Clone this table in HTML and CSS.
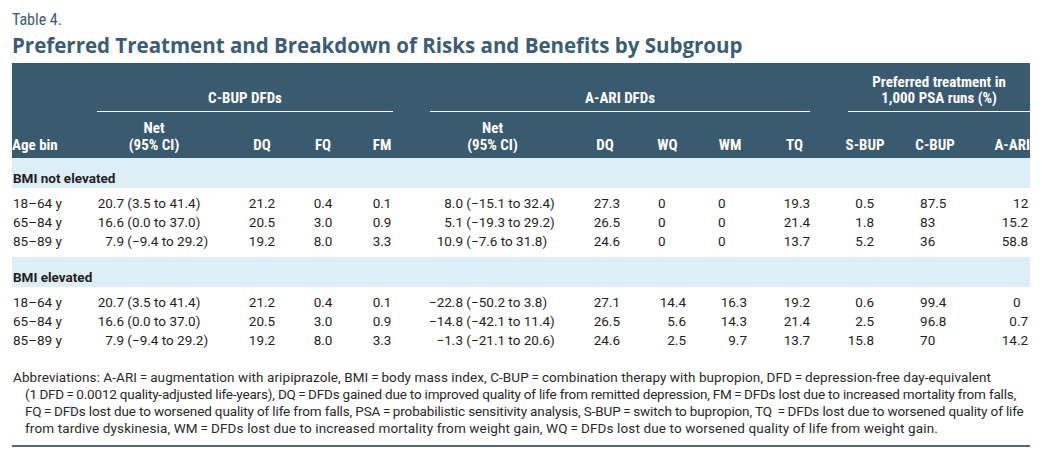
FILE: index.html
```html
<!DOCTYPE html>
<html lang="en">
<head>
<meta charset="utf-8">
<title>Table 4</title>
<link rel="stylesheet" href="styles.css">
</head>
<body>
<div class="page">
  <div class="label">Table 4.</div>
  <h1 class="title">Preferred Treatment and Breakdown of Risks and Benefits by Subgroup</h1>
  <table class="tbl">
    <colgroup>
      <col class="w85"><col class="w135"><col class="w60"><col class="w62"><col class="w56">
      <col class="w165"><col class="w60"><col class="w65"><col class="w60"><col class="w70">
      <col class="w70"><col class="w70"><col class="w60">
    </colgroup>
    <thead>
      <tr class="grow">
        <th></th>
        <th colspan="4" class="g"><div class="gl gl-c">C-BUP DFDs</div></th>
        <th colspan="5" class="g"><div class="gl gl-a">A-ARI DFDs</div></th>
        <th colspan="3" class="g"><div class="gl gl-p">Preferred treatment in<br>1,000 PSA runs (%)</div></th>
      </tr>
      <tr class="crow">
        <th class="h-age">Age bin</th>
        <th class="h-cnet">Net<br>(95% CI)</th>
        <th>DQ</th>
        <th>FQ</th>
        <th>FM</th>
        <th>Net<br>(95% CI)</th>
        <th>DQ</th>
        <th>WQ</th>
        <th>WM</th>
        <th class="h-tq">TQ</th>
        <th>S-BUP</th>
        <th>C-BUP</th>
        <th class="h-aari">A-ARI</th>
      </tr>
    </thead>
    <tbody>
      <tr class="band"><td colspan="13">BMI not elevated</td></tr>
      <tr class="first">
        <td class="age">18–64 y</td>
        <td class="net"><span class="lead">20.7</span> (3.5 to 41.4)</td>
        <td class="c">21.2</td><td class="c">0.4</td><td class="c">0.1</td>
        <td class="net"><span class="lead lead-a">8.0</span> (−15.1 to 32.4)</td>
        <td class="adq">27.3</td><td class="wq z">0</td><td class="wm z">0</td><td class="tq">19.3</td>
        <td class="sb">0.5</td><td class="cb">87.5</td><td class="aa z">12</td>
      </tr>
      <tr>
        <td class="age">65–84 y</td>
        <td class="net"><span class="lead">16.6</span> (0.0 to 37.0)</td>
        <td class="c">20.5</td><td class="c">3.0</td><td class="c">0.9</td>
        <td class="net"><span class="lead lead-a">5.1</span> (−19.3 to 29.2)</td>
        <td class="adq">26.5</td><td class="wq z">0</td><td class="wm z">0</td><td class="tq">21.4</td>
        <td class="sb">1.8</td><td class="cb">83</td><td class="aa">15.2</td>
      </tr>
      <tr class="last">
        <td class="age">85–89 y</td>
        <td class="net"><span class="lead">7.9</span> (−9.4 to 29.2)</td>
        <td class="c">19.2</td><td class="c">8.0</td><td class="c">3.3</td>
        <td class="net"><span class="lead lead-a">10.9</span> (−7.6 to 31.8)</td>
        <td class="adq">24.6</td><td class="wq z">0</td><td class="wm z">0</td><td class="tq">13.7</td>
        <td class="sb">5.2</td><td class="cb">36</td><td class="aa">58.8</td>
      </tr>
      <tr class="band"><td colspan="13">BMI elevated</td></tr>
      <tr class="first">
        <td class="age">18–64 y</td>
        <td class="net"><span class="lead">20.7</span> (3.5 to 41.4)</td>
        <td class="c">21.2</td><td class="c">0.4</td><td class="c">0.1</td>
        <td class="net"><span class="lead lead-a">−22.8</span> (−50.2 to 3.8)</td>
        <td class="adq">27.1</td><td class="wq">14.4</td><td class="wm">16.3</td><td class="tq">19.2</td>
        <td class="sb">0.6</td><td class="cb">99.4</td><td class="aa z">0</td>
      </tr>
      <tr>
        <td class="age">65–84 y</td>
        <td class="net"><span class="lead">16.6</span> (0.0 to 37.0)</td>
        <td class="c">20.5</td><td class="c">3.0</td><td class="c">0.9</td>
        <td class="net"><span class="lead lead-a">−14.8</span> (−42.1 to 11.4)</td>
        <td class="adq">26.5</td><td class="wq">5.6</td><td class="wm">14.3</td><td class="tq">21.4</td>
        <td class="sb">2.5</td><td class="cb">96.8</td><td class="aa">0.7</td>
      </tr>
      <tr class="last">
        <td class="age">85–89 y</td>
        <td class="net"><span class="lead">7.9</span> (−9.4 to 29.2)</td>
        <td class="c">19.2</td><td class="c">8.0</td><td class="c">3.3</td>
        <td class="net"><span class="lead lead-a">−1.3</span> (−21.1 to 20.6)</td>
        <td class="adq">24.6</td><td class="wq">2.5</td><td class="wm">9.7</td><td class="tq">13.7</td>
        <td class="sb">15.8</td><td class="cb">70</td><td class="aa">14.2</td>
      </tr>
    </tbody>
  </table>
  <div class="notes">
    <span class="nl nl1">Abbreviations: A-ARI&thinsp;=&thinsp;augmentation with aripiprazole, BMI&thinsp;=&thinsp;body mass index, C-BUP&thinsp;=&thinsp;combination therapy with bupropion, DFD&thinsp;=&thinsp;depression-free day-equivalent</span>
    <span class="nl nl2">(1&thinsp;DFD&thinsp;=&thinsp;0.0012 quality-adjusted life-years), DQ&thinsp;=&thinsp;DFDs gained due to improved quality of life from remitted depression, FM&thinsp;=&thinsp;DFDs lost due to increased mortality from falls,</span>
    <span class="nl nl3">FQ&thinsp;=&thinsp;DFDs lost due to worsened quality of life from falls, PSA&thinsp;=&thinsp;probabilistic sensitivity analysis, S-BUP&thinsp;=&thinsp;switch to bupropion, TQ&nbsp;&thinsp;=&thinsp;DFDs lost due to worsened quality of life</span>
    <span class="nl nl4">from tardive dyskinesia, WM&thinsp;=&thinsp;DFDs lost due to increased mortality from weight gain, WQ&thinsp;=&thinsp;DFDs lost due to worsened quality of life from weight gain.</span>
  </div>
</div>
</body>
</html>
```

FILE: styles.css
```css
body {
  margin: 0;
  background: #ffffff;
}

.page {
  width: 1018px;
  padding: 10px 12px 0 12px;
}

.label {
  font-family: "Liberation Sans Narrow", "Roboto Condensed", "DejaVu Sans Condensed", sans-serif;
  font-size: 16px;
  line-height: 20px;
  color: #3b5d74;
}

.title {
  margin: 4px 0 6px 0;
  font-family: "Open Sans", "Liberation Sans", sans-serif;
  font-weight: 700;
  font-size: 20.5px;
  line-height: 23px;
  color: #3b5d74;
}

.tbl {
  width: 1018px;
  table-layout: fixed;
  border-collapse: collapse;
  border-spacing: 0;
}

.w85 { width: 85px; }
.w135 { width: 135px; }
.w60 { width: 60px; }
.w62 { width: 62px; }
.w56 { width: 56px; }
.w165 { width: 165px; }
.w65 { width: 65px; }
.w70 { width: 70px; }

.tbl thead {
  background: #395a6f;
}

.tbl th {
  padding: 0;
  font-family: "Liberation Sans Narrow", "Roboto Condensed", "DejaVu Sans Condensed", sans-serif;
  font-weight: 700;
  font-size: 15px;
  line-height: 17px;
  color: #ffffff;
  text-align: center;
  vertical-align: bottom;
}

.grow {
  height: 49px;
}

.gl {
  line-height: 16px;
  padding-bottom: 5px;
  border-bottom: 1px solid #ffffff;
}

.gl-c { margin-right: 17px; }
.gl-a { margin: 0 20px; }
.gl-p { margin-left: 18px; }

.crow {
  height: 46px;
}

.crow th {
  padding-bottom: 4px;
}

.tbl th.h-age {
  text-align: left;
}

.tbl th.h-cnet {
  padding-right: 21px;
}

.tbl th.h-tq {
  text-align: right;
  padding-right: 27px;
}

.tbl th.h-aari {
  text-align: right;
}

.band td {
  height: 30px;
  box-sizing: border-box;
  padding: 0 0 4px 1px;
  background: #ddeef7;
  font-family: "Liberation Sans Narrow", "Roboto Condensed", "DejaVu Sans Condensed", sans-serif;
  font-weight: 700;
  font-size: 15px;
  line-height: 17px;
  color: #231f20;
  vertical-align: bottom;
}

.tbl td {
  padding-top: 0;
  padding-bottom: 0;
  font-family: Roboto, "Liberation Sans", sans-serif;
  font-size: 13.5px;
  line-height: 19px;
  color: #231f20;
  white-space: nowrap;
}

.tbl tr.first td {
  padding-top: 6px;
}

.tbl tr.last td {
  padding-bottom: 6px;
}

.age {
  padding-left: 1px;
}

.net {
  padding-left: 0;
}

.lead {
  display: inline-block;
  width: 27px;
  text-align: right;
}

.lead-a {
  width: 53px;
}

.c {
  text-align: center;
}

.adq {
  text-align: right;
  padding-right: 15px;
}

.wq {
  text-align: right;
  padding-right: 14px;
}

.wq.z {
  text-align: left;
  padding-left: 23px;
  padding-right: 0;
}

.wm {
  text-align: right;
  padding-right: 13px;
}

.wm.z {
  text-align: left;
  padding-left: 18px;
  padding-right: 0;
}

.tq {
  text-align: right;
  padding-right: 20px;
}

.sb {
  text-align: right;
  padding-right: 26px;
}

.cb {
  text-align: left;
  padding-left: 20px;
}

.aa {
  text-align: right;
  padding-right: 2px;
}

.aa.z {
  text-align: left;
  padding-left: 43px;
  padding-right: 0;
}

.notes {
  margin-top: 13px;
  padding-bottom: 8px;
  border-bottom: 2px solid #4d6a7e;
  font-family: Roboto, "Liberation Sans", sans-serif;
  font-size: 13.5px;
  line-height: 17px;
  color: #2a2a2a;
}

.nl {
  display: block;
  white-space: nowrap;
  padding-left: 13px;
}

.nl1 {
  padding-left: 1px;
  letter-spacing: 0.08px;
}

.nl2 {
  letter-spacing: -0.19px;
}

.nl3 {
  letter-spacing: -0.13px;
}

.nl4 {
  letter-spacing: 0.13px;
}
```
